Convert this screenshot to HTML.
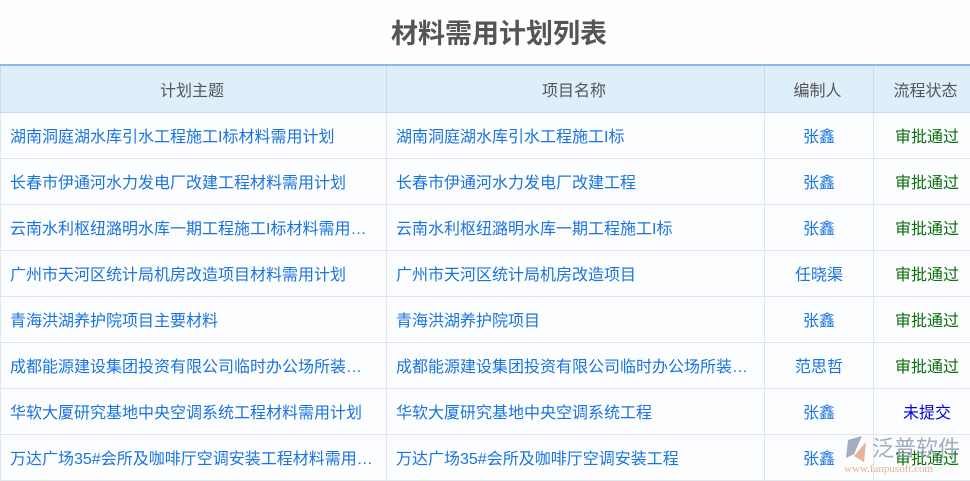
<!DOCTYPE html>
<html><head><meta charset="utf-8"><style>
body{margin:0;width:970px;height:480px;background:#fdfeff;font-family:"Liberation Sans","Noto Sans CJK SC",sans-serif;overflow:hidden;position:relative}
h1{margin:0;position:absolute;top:13px;left:0;width:998px;text-align:center;font-size:27px;font-weight:bold;color:#555;line-height:42px}
table{position:absolute;top:64px;left:0;border-collapse:collapse;table-layout:fixed;width:980px}
td,th{height:46px;box-sizing:border-box;border:1px solid #e2e5ea;font-size:16px;white-space:nowrap;overflow:hidden;text-overflow:ellipsis;padding:0 12px 0 9px;font-weight:normal}
th{background:#dfeefb;color:#555;border-color:#c5dcf2;text-align:center}
tr:first-child th{border-top:2px solid #8cb8e8}
td{color:#1a74e0;background:#fcfdff}
td.c{text-align:center;padding:0}
.g{color:#0a6e0a}.b{color:#0000d8}
.logo{position:absolute;left:840px;top:432px;width:130px;height:48px}
</style></head><body>
<h1>材料需用计划列表</h1>
<table>
<colgroup><col style="width:386px"><col style="width:378px"><col style="width:109px"><col style="width:107px"></colgroup>
<tr><th style="height:47px">计划主题</th><th style="height:47px">项目名称</th><th style="height:47px">编制人</th><th style="height:47px">流程状态</th></tr>
<tr><td>湖南洞庭湖水库引水工程施工I标材料需用计划</td><td>湖南洞庭湖水库引水工程施工I标</td><td class="c">张鑫</td><td class="c g">审批通过</td></tr>
<tr><td>长春市伊通河水力发电厂改建工程材料需用计划</td><td>长春市伊通河水力发电厂改建工程</td><td class="c">张鑫</td><td class="c g">审批通过</td></tr>
<tr><td>云南水利枢纽潞明水库一期工程施工I标材料需用计划</td><td>云南水利枢纽潞明水库一期工程施工I标</td><td class="c">张鑫</td><td class="c g">审批通过</td></tr>
<tr><td>广州市天河区统计局机房改造项目材料需用计划</td><td>广州市天河区统计局机房改造项目</td><td class="c">任晓渠</td><td class="c g">审批通过</td></tr>
<tr><td>青海洪湖养护院项目主要材料</td><td>青海洪湖养护院项目</td><td class="c">张鑫</td><td class="c g">审批通过</td></tr>
<tr><td>成都能源建设集团投资有限公司临时办公场所装修工程材料</td><td>成都能源建设集团投资有限公司临时办公场所装修工程</td><td class="c">范思哲</td><td class="c g">审批通过</td></tr>
<tr><td>华软大厦研究基地中央空调系统工程材料需用计划</td><td>华软大厦研究基地中央空调系统工程</td><td class="c">张鑫</td><td class="c b">未提交</td></tr>
<tr><td>万达广场35#会所及咖啡厅空调安装工程材料需用计划</td><td>万达广场35#会所及咖啡厅空调安装工程</td><td class="c">张鑫</td><td class="c g">审批通过</td></tr>
</table>
<svg class="logo" viewBox="0 0 130 48">
<path d="M8 8 L22 4 L14 22 L6 26 Z" fill="#8a9ab0" opacity=".8"/>
<path d="M14 24 L26 10 L24 30 Z" fill="#e0a080" opacity=".8"/>
<text x="32" y="24" font-size="22" fill="#8a9ab0" opacity=".8" font-family="Noto Sans CJK SC,sans-serif">泛普软件</text>
<text x="4" y="40" font-size="11" fill="#e0a080" opacity=".8" font-family="Liberation Serif,serif">www.fanpusoft.com</text>
</svg>
</body></html>
